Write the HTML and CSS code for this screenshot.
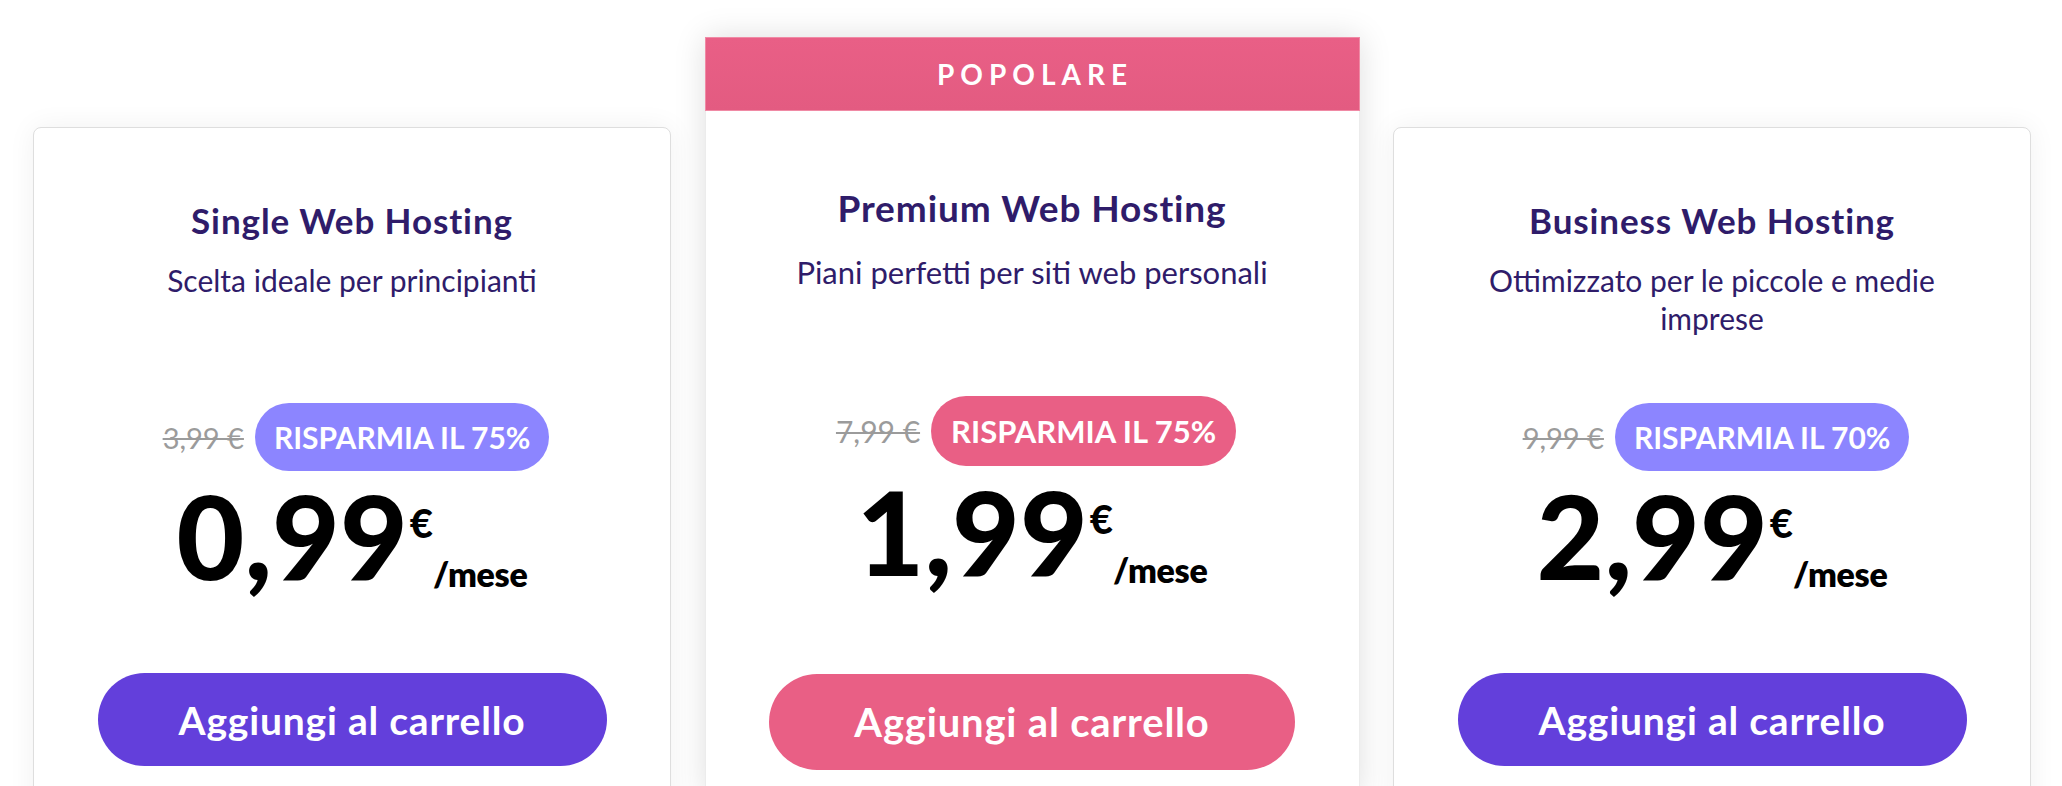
FILE: index.html
```html
<!DOCTYPE html>
<html lang="it">
<head>
<meta charset="utf-8">
<title>Piani di hosting</title>
<link rel="stylesheet" href="styles.css">
</head>
<body>
<div class="plans">
  <div class="card">
    <div class="head">
      <h3 class="title">Single Web Hosting</h3>
      <p class="sub">Scelta ideale per principianti</p>
    </div>
    <div class="deal"><span class="old">3,99 €</span><span class="badge">RISPARMIA IL 75%</span></div>
    <div class="price"><span class="amount">0,99</span><span class="cur">€</span><span class="per">/mese</span></div>
    <button class="cta">Aggiungi al carrello</button>
  </div>

  <div class="card card--popular">
    <div class="ribbon">POPOLARE</div>
    <div class="body">
      <div class="head">
        <h3 class="title">Premium Web Hosting</h3>
        <p class="sub">Piani perfetti per siti web personali</p>
      </div>
      <div class="deal"><span class="old">7,99 €</span><span class="badge">RISPARMIA IL 75%</span></div>
      <div class="price"><span class="amount">1,99</span><span class="cur">€</span><span class="per">/mese</span></div>
      <button class="cta">Aggiungi al carrello</button>
    </div>
  </div>

  <div class="card">
    <div class="head">
      <h3 class="title">Business Web Hosting</h3>
      <p class="sub">Ottimizzato per le piccole e medie imprese</p>
    </div>
    <div class="deal"><span class="old">9,99 €</span><span class="badge">RISPARMIA IL 70%</span></div>
    <div class="price"><span class="amount">2,99</span><span class="cur">€</span><span class="per">/mese</span></div>
    <button class="cta">Aggiungi al carrello</button>
  </div>
</div>
</body>
</html>
```

FILE: styles.css
```css
* { box-sizing: border-box; }

html, body {
  margin: 0;
  padding: 0;
  background: #ffffff;
  overflow: hidden;
}

body {
  font-family: "Lato", "Noto Sans", sans-serif;
  color: #2f1c6a;
}

.plans {
  display: flex;
  align-items: flex-start;
  gap: 33.5px;
  padding: 37px 31px 0 33px;
  height: 786px;
}

.card {
  width: 638px;
  height: 760px;
  margin-top: 90px;
  background: #ffffff;
  border: 1px solid #dedede;
  border-radius: 8px;
  box-shadow: 0 0 28px rgba(0, 0, 0, 0.06);
  display: flex;
  flex-direction: column;
  align-items: center;
  flex-shrink: 0;
}

.head {
  width: 100%;
  height: 275px;
  padding: 72px 92px 0;
  text-align: center;
}

.title {
  margin: 0;
  font-size: 35px;
  line-height: 40px;
  font-weight: 700;
  letter-spacing: 0.9px;
  color: #2f1c6a;
}

.sub {
  margin: 21px 0 0;
  font-size: 30px;
  line-height: 38px;
  font-weight: 400;
  color: #2f1c6a;
}

.deal {
  display: flex;
  align-items: center;
  justify-content: center;
  gap: 11px;
  height: 68px;
  padding-left: 8px;
}

.old {
  font-size: 29px;
  color: #9b9b9b;
  text-decoration: line-through;
  text-decoration-thickness: 2px;
}

.badge {
  display: flex;
  align-items: center;
  height: 68px;
  padding: 0 19px;
  border-radius: 34px;
  background: #8c85ff;
  color: #ffffff;
  font-size: 30px;
  font-weight: 700;
}

.price {
  margin-top: 6px;
  height: 117px;
  line-height: 117px;
  white-space: nowrap;
  color: #000000;
  font-weight: 900;
}

.amount {
  font-size: 117px;
  letter-spacing: 0;
}

.cur {
  font-size: 40px;
  line-height: 40px;
  vertical-align: 42px;
  margin-left: 2px;
}

.per {
  font-size: 34px;
  line-height: 34px;
  font-weight: 800;
  vertical-align: -7px;
  letter-spacing: -0.3px;
}

.cta {
  margin-top: 79px;
  width: 509px;
  height: 93px;
  border: 0;
  border-radius: 47px;
  background: #633fdb;
  color: #ffffff;
  font-family: inherit;
  font-size: 39px;
  font-weight: 700;
  letter-spacing: 0.8px;
  cursor: pointer;
}

/* Popular (middle) plan */
.card--popular {
  width: 655px;
  margin-top: 0;
  border: 0;
  border-radius: 0;
  box-shadow: 0 0 30px rgba(0, 0, 0, 0.13);
}

.ribbon {
  width: 100%;
  height: 74px;
  display: flex;
  align-items: center;
  justify-content: center;
  background: linear-gradient(#e95f86, #e35b81);
  border: 1px solid #f08aa5;
  color: #ffffff;
  font-size: 28px;
  font-weight: 700;
  letter-spacing: 6px;
  padding-left: 6px;
}

.body {
  width: 100%;
  flex: 1;
  display: flex;
  flex-direction: column;
  align-items: center;
  border-left: 1px solid #ececec;
  border-right: 1px solid #ececec;
}

.card--popular .head {
  height: 285px;
  padding: 76px 50px 0;
}

.card--popular .title {
  font-size: 37px;
  line-height: 42px;
}

.card--popular .sub {
  margin-top: 24px;
  font-size: 31px;
}

.card--popular .deal {
  height: 70px;
}

.card--popular .badge {
  height: 70px;
  border-radius: 35px;
  padding: 0 20px;
  background: #e95f85;
  font-size: 31px;
}

.card--popular .old {
  font-size: 30px;
}

.card--popular .price {
  margin-top: 7px;
}

.card--popular .cta {
  margin-top: 84px;
  width: 526px;
  height: 96px;
  border-radius: 48px;
  background: #e95f85;
  font-size: 40px;
}
```
